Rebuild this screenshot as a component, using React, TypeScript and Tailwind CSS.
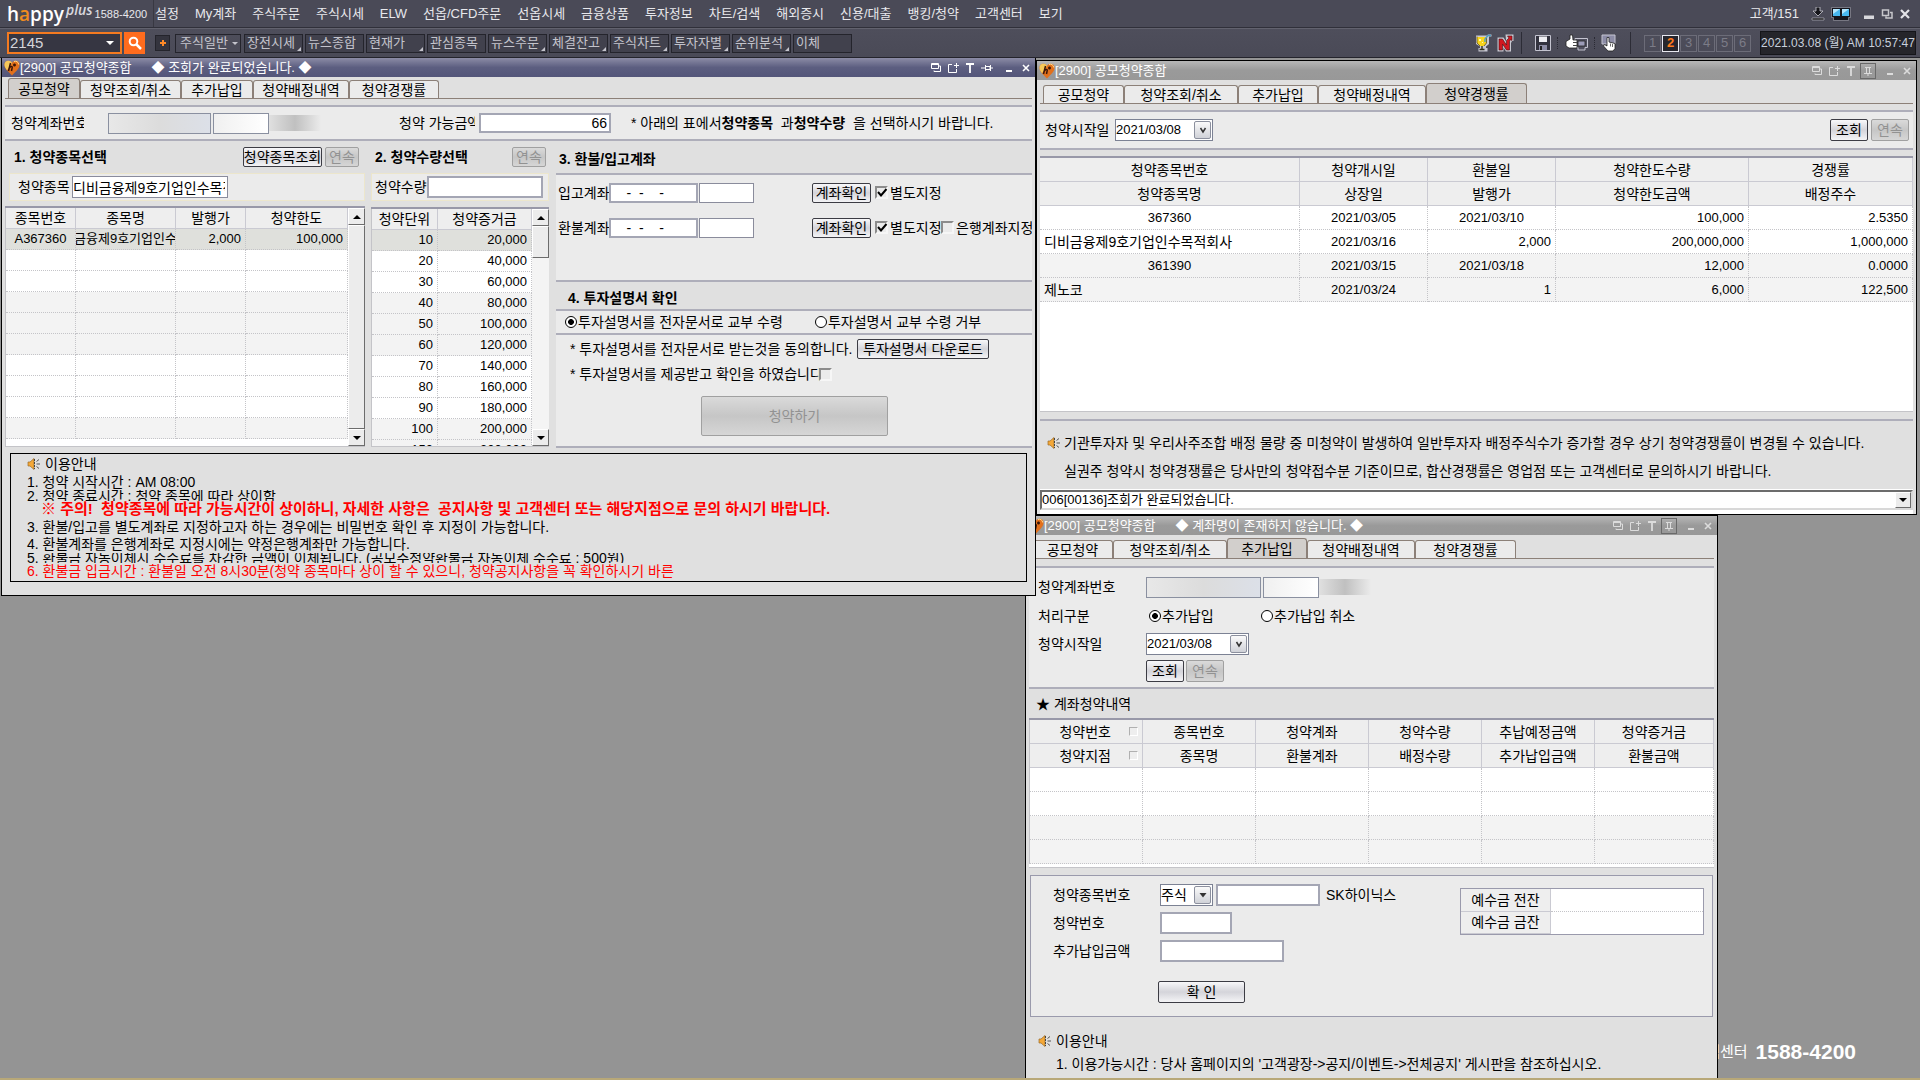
import { InputHTMLAttributes, ReactNode } from 'react';

import clsx from 'clsx';

const MENU = [
  '설정', 'My계좌', '주식주문', '주식시세', 'ELW', '선옵/CFD주문', '선옵시세', '금융상품',
  '투자정보', '차트/검색', '해외증시', '신용/대출', '뱅킹/청약', '고객센터', '보기',
];

const SHORTCUTS = [
  { label: '장전시세', more: true },
  { label: '뉴스종합', more: false },
  { label: '현재가', more: true },
  { label: '관심종목', more: false },
  { label: '뉴스주문', more: true },
  { label: '체결잔고', more: true },
  { label: '주식차트', more: true },
  { label: '투자자별', more: true },
  { label: '순위분석', more: true },
  { label: '이체', more: false },
];

const TABS = [
  { label: '공모청약', width: 'w-[72px]', wide: 'w-[81px]' },
  { label: '청약조회/취소', width: 'w-[101px]', wide: 'w-[114px]' },
  { label: '추가납입', width: 'w-[72px]', wide: 'w-[80px]' },
  { label: '청약배정내역', width: 'w-[96px]', wide: 'w-[108px]' },
  { label: '청약경쟁률', width: 'w-[90px]', wide: 'w-[101px]' },
];

const UNITS = [
  ['10', '20,000'],
  ['20', '40,000'],
  ['30', '60,000'],
  ['40', '80,000'],
  ['50', '100,000'],
  ['60', '120,000'],
  ['70', '140,000'],
  ['80', '160,000'],
  ['90', '180,000'],
  ['100', '200,000'],
  ['150', '300,000'],
];

const RATES = [
  {
    code: '367360', open: '2021/03/05', refund: '2021/03/10', limitQty: '100,000', rate: '2.5350',
    name: '디비금융제9호기업인수목적회사', listed: '2021/03/16', price: '2,000', limitAmt: '200,000,000', alloc: '1,000,000',
  },
  {
    code: '361390', open: '2021/03/15', refund: '2021/03/18', limitQty: '12,000', rate: '0.0000',
    name: '제노코', listed: '2021/03/24', price: '1', limitAmt: '6,000', alloc: '122,500',
  },
];

const HISTORY_HEAD = [
  ['청약번호', '종목번호', '청약계좌', '청약수량', '추납예정금액', '청약증거금'],
  ['청약지점', '종목명', '환불계좌', '배정수량', '추가납입금액', '환불금액'],
];

// three white rows, three shaded rows, repeating
const shade = (i: number) => (i === 0 ? 'bg-[#dfe0dc]' : Math.floor(i / 3) % 2 === 1 ? 'bg-[#f3f3f3]' : 'bg-white');

const CELL = 'border-r border-b border-dotted border-[#c4c4c8] p-0';
const HEAD = 'border-r border-b border-[#cacad2] bg-[#eeeeee] p-0 text-center font-normal';

function HeartIcon() {
  return (
    <svg viewBox="0 0 16 16" className="h-4 w-4 shrink-0" aria-hidden="true">
      <path d="M8 15.5C4 11.5.5 8.500.5 4.800.5 2.300 2.200.8 4.300.8 6 .8 7.300 1.700 8 3c.7-1.300 2-2.200 3.700-2.200 2.100 0 3.800 1.500 3.800 4C15.500 8.500 12 11.500 8 15.500z" fill="#e2701c" />
      <path d="M8 3C7.300 1.700 6 .8 4.300.8 2.200.8.5 2.300.5 4.800c0 2 1 3.700 2.500 5.400L8 3z" fill="#f6c95a" />
      <path d="M10 1.500c2-.9 4.500.3 4.700 3" stroke="#ffd98a" fill="none" />
      <path d="M6.500 3 4.500 11M5.500 8c1-2 3-2 2.700-.3L7.500 11M10.500 3.500v3M9 5h3" stroke="#3a1608" strokeWidth="1.500" fill="none" />
    </svg>
  );
}

function SpeakerIcon() {
  return (
    <svg viewBox="0 0 14 12" className="h-3 w-3.5 shrink-0" aria-hidden="true">
      <path d="M1 4h2l4-3.500v11L3 8H1z" fill="#f4a838" stroke="#9a6a28" strokeWidth=".7" />
      <path d="M7.500 1v10" stroke="#444" strokeDasharray="2 1" />
      <path d="M9.500 3.500 12 1.500M9.500 6H13M9.500 8.500l2.500 2" stroke="#555" />
    </svg>
  );
}

function WindowControls({ pinned }: { pinned?: boolean }) {
  const button = 'flex h-4 w-4 items-center justify-center';
  return (
    <div className={clsx('ml-auto flex items-center gap-px pr-px', pinned ? 'text-[#dcdcdc]' : 'text-white')}>
      <button type="button" aria-label="창 복사" className={button}>
        <svg viewBox="0 0 12 12" className="h-3 w-3" fill="none" stroke="currentColor">
          <path d="M1.500 1.500h7v5h-7zM1 2.500h8M4 8.500v1h6.500V4H9" />
        </svg>
      </button>
      <button type="button" aria-label="새 창" className={button}>
        <svg viewBox="0 0 12 12" className="h-3 w-3" fill="none" stroke="currentColor">
          <path d="M5 2.500H1.500v8h8V7M7 3.500h5M9.500 1v5" />
        </svg>
      </button>
      <button type="button" aria-label="글꼴" className={button}>
        <svg viewBox="0 0 12 12" className="h-3 w-3" fill="none" stroke="currentColor">
          <path d="M2 2h8M6 2v9" strokeWidth="1.800" />
        </svg>
      </button>
      <button type="button" aria-label="고정" className={clsx(button, pinned && 'border border-[#6a6a6a]')}>
        {pinned ? (
          <svg viewBox="0 0 12 12" className="h-3 w-3" fill="none" stroke="currentColor">
            <path d="M3 2.500h6M4.500 3v5M7.500 3v5M2 8.500h8M6 9v2" />
          </svg>
        ) : (
          <svg viewBox="0 0 12 12" className="h-3 w-3" fill="none" stroke="currentColor">
            <path d="M0 6h4M4.500 3v6M5 4.500h4v3H5M9.500 3v6M10 6h2" />
          </svg>
        )}
      </button>
      <button type="button" aria-label="최소화" className={clsx(button, 'ml-[5px]')}>
        <svg viewBox="0 0 12 12" className="h-3 w-3" fill="none" stroke="currentColor">
          <path d="M3 9h6" strokeWidth="2" />
        </svg>
      </button>
      <button type="button" aria-label="닫기" className={button}>
        <svg viewBox="0 0 12 12" className="h-3 w-3" fill="none" stroke="currentColor">
          <path d="m3 3 6 6M9 3 3 9" strokeWidth="1.600" />
        </svg>
      </button>
    </div>
  );
}

function TitleBar({ message, active }: { message?: string; active?: boolean }) {
  return (
    <div
      className={clsx(
        'flex h-[19px] items-center overflow-hidden pl-[2px] text-[13px] whitespace-pre text-white',
        active
          ? 'bg-linear-to-b from-[#8c8ca6] via-[#5c5e80] to-[#54567a]'
          : 'bg-linear-to-b from-[#b8b8b8] via-[#9a9a9a] to-[#989898]',
      )}
    >
      <HeartIcon />
      <span>[2900] 공모청약종합</span>
      {message && <span className="pl-5">◆ {message} ◆</span>}
      <WindowControls pinned={!active} />
    </div>
  );
}

function TabBar({ selected, wide }: { selected: string; wide?: boolean }) {
  return (
    <div role="tablist" className={clsx('mx-[3px] flex items-end border-b border-[#8c8078]', wide ? 'h-6' : 'h-[22px]')}>
      {TABS.map((tab) => (
        <button
          key={tab.label}
          type="button"
          role="tab"
          aria-selected={tab.label === selected}
          className={clsx(
            'rounded-t-[3px] border border-b-0 border-[#8c8078] whitespace-nowrap first:ml-[3px]',
            wide ? tab.wide : tab.width,
            tab.label === selected ? 'h-[20px] bg-[#d2cfcc]' : 'h-[18px] bg-[#ebebeb]',
          )}
        >
          {tab.label}
        </button>
      ))}
    </div>
  );
}

function PushButton({ children, disabled, className }: { children: ReactNode; disabled?: boolean; className: string }) {
  return (
    <button
      type="button"
      disabled={disabled}
      className={clsx(
        'shrink-0 overflow-hidden rounded-[2px] border whitespace-nowrap',
        disabled
          ? 'border-[#a0a0a0] bg-linear-to-b from-[#dadada] via-[#c6c6c6] to-[#d6d6d6] text-[#929292]'
          : 'border-[#3c3c44] bg-linear-to-b from-[#f8f8fa] via-[#d4d4da] to-[#f4f4f6] text-black',
        className,
      )}
    >
      <span className="flex justify-center">{children}</span>
    </button>
  );
}

function Field({ className, ...props }: InputHTMLAttributes<HTMLInputElement>) {
  return (
    <input
      {...props}
      className={clsx('shrink-0 rounded-none border bg-white pr-[2px] text-black outline-none', className)}
    />
  );
}

function Check({ id, label, checked, className }: { id: string; label: string; checked?: boolean; className?: string }) {
  return (
    <label htmlFor={id} className={clsx('flex items-center gap-[2px] overflow-hidden whitespace-nowrap', className)}>
      <span className="grid h-[13px] w-[13px] shrink-0">
        <input
          id={id}
          type="checkbox"
          defaultChecked={checked}
          className="peer col-start-1 row-start-1 h-[13px] w-[13px] appearance-none border-2 border-t-[#8c8c8c] border-r-[#f6f6f6] border-b-[#f6f6f6] border-l-[#8c8c8c] bg-[#ebebeb]"
        />
        <svg viewBox="0 0 13 13" className="pointer-events-none invisible col-start-1 row-start-1 peer-checked:visible" fill="none" stroke="#000" strokeWidth="2">
          <path d="m3 6 3 3.500L11.500 3" />
        </svg>
      </span>
      {label}
    </label>
  );
}

function Radio({ id, name, label, checked, className }: { id: string; name: string; label: string; checked?: boolean; className?: string }) {
  return (
    <label htmlFor={id} className={clsx('flex shrink-0 items-center gap-px whitespace-nowrap', className)}>
      <input
        id={id}
        type="radio"
        name={name}
        defaultChecked={checked}
        className="h-3 w-3 appearance-none rounded-full border border-black bg-white bg-radial from-white to-white checked:from-black checked:from-35% checked:to-white checked:to-45%"
      />
      {label}
    </label>
  );
}

function Dropdown({ id, value, className, glyph = 'v' }: { id: string; value: string; className: string; glyph?: 'v' | 'arrow' }) {
  return (
    <div className={clsx('grid shrink-0 border border-[#7c8294] bg-white', className)}>
      <select id={id} defaultValue={value} className="col-start-1 row-start-1 w-full appearance-none rounded-none bg-transparent text-black outline-none">
        <option>{value}</option>
      </select>
      <span className="pointer-events-none col-start-1 row-start-1 m-px flex w-[17px] items-center justify-center justify-self-end rounded-[2px] border border-[#8c909e] bg-linear-to-b from-[#fafafa] to-[#d0d2d8]">
        <svg viewBox="0 0 8 8" className="h-2 w-2" fill="none" stroke="#333" strokeWidth="1.500">
          {glyph === 'v' ? <path d="m1.500 2 2.500 4 2.500-4" /> : <path d="M.5 2h7L4 6.500z" fill="#333" stroke="none" />}
        </svg>
      </span>
    </div>
  );
}

function ScrollButton({ down }: { down?: boolean }) {
  return (
    <button
      type="button"
      aria-label={down ? '아래로' : '위로'}
      className="flex h-[17px] w-full shrink-0 items-center justify-center border border-t-white border-r-[#6c6c6c] border-b-[#6c6c6c] border-l-white bg-[#ececec]"
    >
      <svg viewBox="0 0 8 4" className="h-1 w-2">
        <path d={down ? 'M0 0h8L4 4z' : 'M0 4h8L4 0z'} fill="#000" />
      </svg>
    </button>
  );
}

function ScrollBar({ full }: { full?: boolean }) {
  return (
    <div className="flex w-[17px] shrink-0 flex-col bg-[#f4f4f4]">
      <ScrollButton />
      <div
        className={clsx(
          'border border-t-white border-r-[#6c6c6c] border-b-[#6c6c6c] border-l-white bg-[#ececec]',
          full ? 'flex-1' : 'mb-auto h-8',
        )}
      />
      <ScrollButton down />
    </div>
  );
}

function MaskedAccount({ id, size }: { id: string; size: string }) {
  return (
    <div className="flex shrink-0 items-center">
      <Field id={id} readOnly className={clsx('h-[21px] border-[#8a90a0] bg-linear-to-r from-[#e8e8e8] via-[#dcdcdc] to-[#dce0e8]', size)} />
      <Field aria-label="계좌 비밀번호" readOnly className="ml-[2px] h-[21px] w-[56px] border-[#8a90a0] bg-linear-to-r from-[#f0f0f0] to-white" />
      <span className="h-4 w-[52px] bg-linear-to-r from-[#e0e0e0] via-[#c0c0c0] to-[#ebebeb]" />
    </div>
  );
}

function TopBar() {
  return (
    <header className="bg-[#4a4a57] text-[13px] text-[#e8e8ec]">
      <div className="flex h-7 items-center border-b border-[#30303a]">
        <div className="flex h-full w-[154px] shrink-0 items-center border-r border-[#383842] pl-[7px]">
          <span className="font-['Open_Sans'] text-[19px] font-semibold text-white">
            h<span className="text-[#f08c1e]">a</span>ppy
          </span>
          <span className="mb-2 ml-[2px] font-['Open_Sans'] text-[14px] font-semibold text-[#d8d8de] italic">plus</span>
          <span className="ml-[2px] text-[11px] whitespace-nowrap">1588-4200</span>
        </div>
        <nav className="flex items-center gap-4 pl-px">
          {MENU.map((item) => (
            <a key={item} href="#" className="whitespace-nowrap">
              {item}
            </a>
          ))}
        </nav>
        <div className="ml-auto flex items-center pr-[9px]">
          <span className="mr-3">고객/151</span>
          <svg viewBox="0 0 14 14" className="h-3.5 w-3.5" aria-hidden="true">
            <path d="M5 0h4v4h3L7 9 2 4h3z" fill="#15151a" stroke="#c8c8d0" strokeWidth=".8" />
            <path d="M1 11h12v2H1z" fill="#111" stroke="#c8c8d0" strokeWidth=".6" />
          </svg>
          <svg viewBox="0 0 20 14" className="ml-1.5 h-3.5 w-5" aria-hidden="true">
            <path d="M.5.5h19v10h-2v3h-15v-3h-2z" fill="#15151c" stroke="#a8a8b4" strokeWidth=".6" />
            <path d="M2 2h7v7H2zM11 2h7v7h-7z" fill="#48b8f0" />
            <path d="M2 2h7L2 7zM11 2h7l-7 5z" fill="#b4e6fc" />
          </svg>
          <button type="button" aria-label="최소화" className="ml-3">
            <svg viewBox="0 0 12 12" className="h-3 w-3"><path d="M1 7.500h10V11H1z" fill="#d8d8dc" /></svg>
          </button>
          <button type="button" aria-label="이전 크기로" className="ml-[6px]">
            <svg viewBox="0 0 12 12" className="h-3 w-3" fill="none" stroke="#c8c8cc" strokeWidth="1.500"><path d="M1.500 2h6v5.500h-6zM9 4.500h2V10H5V8.500" /></svg>
          </button>
          <button type="button" aria-label="닫기" className="ml-[6px]">
            <svg viewBox="0 0 12 12" className="h-3 w-3" stroke="#e4e4e8" strokeWidth="2.200"><path d="m2 2 8 8M10 2l-8 8" /></svg>
          </button>
        </div>
      </div>

      <div className="flex h-[30px] items-center border-t border-b border-t-[#62626e] border-b-[#24242c] bg-linear-to-b from-[#4e4e5b] to-[#4a4a57] pl-[7px] text-[#c4c4cc]">
        <div className="grid h-[22px] w-[115px] shrink-0 border-2 border-[#f47a20] bg-[#363642]">
          <input aria-label="화면번호" defaultValue="2145" className="col-start-1 row-start-1 w-full bg-transparent pl-px text-[15px] text-[#d4d4da] outline-none" />
          <svg viewBox="0 0 8 4" className="pointer-events-none col-start-1 row-start-1 mr-1.5 h-1 w-2 self-center justify-self-end"><path d="M0 0h8L4 4z" fill="#fff" /></svg>
        </div>
        <button type="button" aria-label="검색" className="ml-[2px] flex h-[22px] w-[21px] items-center justify-center bg-[#ff6c1e]">
          <svg viewBox="0 0 14 14" className="h-3.5 w-3.5" fill="none" stroke="#fff" strokeWidth="2"><circle cx="5.500" cy="5.500" r="3.800" /><path d="m8.500 8.500 4.500 4.500" strokeWidth="2.500" /></svg>
        </button>
        <button type="button" aria-label="추가" className="ml-[10px] flex h-4 w-[15px] items-center justify-center border border-[#24242c] bg-[#34343e]">
          <svg viewBox="0 0 8 8" className="h-2 w-2" stroke="#ff8a28" strokeWidth="2"><path d="M4 1v6M1 4h6" /></svg>
        </button>
        <button type="button" className="ml-[5px] flex h-[19px] w-[66px] items-center border border-[#24242c] pl-1 whitespace-nowrap">
          주식일반
          <svg viewBox="0 0 6 3" className="mr-[2px] ml-auto h-[3px] w-1.5"><path d="M0 0h6L3 3z" fill="#c4c4cc" /></svg>
        </button>
        <div className="flex gap-[2px] pl-[3px]">
          {SHORTCUTS.map((item) => (
            <button key={item.label} type="button" className="flex h-[19px] w-[59px] items-center border border-[#24242c] bg-[#41414d] pl-[2px] whitespace-nowrap">
              {item.label}
              {item.more && (
                <svg viewBox="0 0 5 5" className="mt-auto mr-px mb-px ml-auto h-1 w-1"><path d="M5 0v5H0z" fill="#c4c4cc" /></svg>
              )}
            </button>
          ))}
        </div>

        <div className="ml-auto flex shrink-0 items-center pr-1">
          <button type="button" aria-label="라운지">
            <svg viewBox="0 0 17 18" className="h-[18px] w-[17px]">
              <path d="M1 1.500h11L13 .5h3.500v2H14V10l-3 2.500v1.500h1.500v3.500h-9V14H5v-1.500L1 10z" fill="#c8c8d4" />
              <path d="M2 3h9.500v6l-2.500 3H5L2 9z" fill="#f8d41c" />
              <path d="M2 2.500V9l3 3M11.500 4v5L9 12" stroke="#5a5020" strokeWidth=".8" fill="none" />
              <path d="M7 12v3M4.500 15.500h5" stroke="#33331c" strokeWidth="1.400" />
              <path d="M4 5h2v2H4zM7 8h1v1H7z" fill="#fff8b0" />
              <path d="M10 8V5l3-3.500h3" stroke="#4c9cc0" strokeWidth="1.400" fill="none" />
            </svg>
          </button>
          <button type="button" aria-label="뉴스" className="ml-[5px]">
            <svg viewBox="0 0 17 18" className="h-[18px] w-[17px]">
              <path d="M.5 3.500h6l2.500 4V6l-.5-5.500h8V7H15l-1 2v8.500H9l-2.500-4v4H.5z" fill="#c8c8d0" />
              <path d="M2 16V5h3.500l4 6V6.500L12 4l-1.500-2H15v4.500L13.500 5.500l-1 2V16h-3l-4-6v6z" fill="#d01820" stroke="#4c0c10" strokeWidth=".6" />
            </svg>
          </button>
          <span className="mx-[7px] h-[22px] w-px bg-[#2c2c36]" />
          <button type="button" aria-label="저장" className="ml-1.5">
            <svg viewBox="0 0 16 16" className="h-4 w-4">
              <path d="M.5.5h15v15H.5z" fill="#33333f" stroke="#c4c4d0" />
              <path d="M4 1.500h8V7H4z" fill="#f0f0f4" />
              <path d="M4 10h8v5H4z" fill="#8c8ca4" />
              <path d="M5 11h2v4H5z" fill="#222" />
            </svg>
          </button>
          <span className="mx-[6px] h-3 border-l border-dotted border-[#2a2a34]" />
          <button type="button" aria-label="추천" className="ml-px">
            <svg viewBox="0 0 23 18" className="h-[18px] w-[23px]">
              <path d="M10 4.500h12.500v9H20v2.500h-7v-2.500h-3z" fill="#50505f" stroke="#c4c4d0" />
              <path d="M13 7h7v5h-7z" fill="#9c9cb8" stroke="#222" strokeWidth=".8" />
              <path d="M1 7.500 5 5V1h2.500L8 6h4v8H4l-3-2z" fill="#fff" stroke="#222" strokeWidth=".8" />
              <path d="M8 8.500h4M8 11.500h4" stroke="#444" />
            </svg>
          </button>
          <span className="mx-[6px] h-3 border-l border-dotted border-[#2a2a34]" />
          <button type="button" aria-label="선택">
            <svg viewBox="0 0 16 18" className="h-[18px] w-4">
              <path d="M1 1h13v9H1z" fill="#8c8ca6" stroke="#c4c4d0" />
              <path d="M6 3.500h2V8l6 1.500v5L12 17H7l-4.500-5 1-1.500L6 12z" fill="#fff" stroke="#222" strokeWidth=".8" />
              <path d="M9.500 9.500v3M11.500 10v3" stroke="#444" strokeWidth=".8" />
            </svg>
          </button>
          <span className="mx-[13px] h-[22px] w-px bg-[#2c2c36]" />
          <div className="flex gap-px">
            {[1, 2, 3, 4, 5, 6].map((n) => (
              <button
                key={n}
                type="button"
                className={clsx(
                  'h-[17px] w-[17px] border',
                  n === 2 ? 'border-[#e8e8f0] bg-[#26262e] font-bold text-[#ff7a1c]' : 'border-[#6c6c78] text-[#7c7c88]',
                )}
              >
                <span className="flex h-full items-center justify-center">{n}</span>
              </button>
            ))}
          </div>
          <time className="ml-[9px] flex h-6 w-[156px] items-center justify-center border border-[#15151a] bg-[#25252b] text-[12px] whitespace-nowrap text-[#c8d0dc]">
            2021.03.08 (월) AM 10:57:47
          </time>
        </div>
      </div>
    </header>
  );
}

function StockTable() {
  return (
    <div className="flex h-[241px] border-t-2 border-b border-t-[#9898a8] border-b-[#c4c4c8] bg-white">
      <div className="flex-1 overflow-hidden border-l border-[#c4c4c8]">
        <table className="w-full table-fixed border-separate border-spacing-0">
          <colgroup>
            <col className="w-[70px]" />
            <col className="w-[100px]" />
            <col className="w-[70px]" />
            <col />
          </colgroup>
          <thead>
            <tr className="h-[21px]">
              {['종목번호', '종목명', '발행가', '청약한도'].map((h) => (
                <th key={h} className={HEAD}>{h}</th>
              ))}
            </tr>
          </thead>
          <tbody>
            {Array.from({ length: 10 }, (_, i) => (
              <tr key={i} className={clsx('h-[21px] text-[13px]', shade(i))}>
                <td className={clsx(CELL, 'text-center')}>{i === 0 && 'A367360'}</td>
                <td className={CELL}>
                  {i === 0 && <div className="flex justify-center overflow-hidden whitespace-nowrap">금융제9호기업인수</div>}
                </td>
                <td className={clsx(CELL, 'pr-1 text-right')}>{i === 0 && '2,000'}</td>
                <td className={clsx(CELL, 'pr-1 text-right')}>{i === 0 && '100,000'}</td>
              </tr>
            ))}
          </tbody>
        </table>
      </div>
      <ScrollBar full />
    </div>
  );
}

function UnitTable() {
  return (
    <div className="flex h-[240px] border-t-2 border-b border-t-[#9898a8] border-b-[#c4c4c8] bg-white">
      <div className="flex-1 overflow-hidden border-l border-[#c4c4c8]">
        <table className="w-full table-fixed border-separate border-spacing-0">
          <colgroup>
            <col className="w-[66px]" />
            <col />
          </colgroup>
          <thead>
            <tr className="h-[21px]">
              <th className={HEAD}>청약단위</th>
              <th className={HEAD}>청약증거금</th>
            </tr>
          </thead>
          <tbody>
            {UNITS.map(([unit, deposit], i) => (
              <tr key={unit} className={clsx('h-[21px]', shade(i))}>
                <td className={clsx(CELL, 'pr-1 text-right text-[13px]')}>{unit}</td>
                <td className={clsx(CELL, 'pr-1 text-right text-[13px]')}>{deposit}</td>
              </tr>
            ))}
          </tbody>
        </table>
      </div>
      <ScrollBar />
    </div>
  );
}

function RefundRow({ id, label, bank }: { id: string; label: string; bank?: boolean }) {
  return (
    <div className="flex h-[35px] items-center pl-[2px]">
      <label htmlFor={id} className="w-[51px] shrink-0 overflow-hidden whitespace-nowrap">{label}</label>
      <Field id={id} defaultValue="    -  -    -" className="h-5 w-[89px] border-2 border-[#a4a6b4]" />
      <Field aria-label={`${label} 비밀번호`} className="ml-px h-5 w-[55px] border-[#8a8c9c]" />
      <PushButton className="ml-[58px] h-5 w-[59px]">계좌확인</PushButton>
      <Check id={`${id}-extra`} label="별도지정" checked className="ml-1 w-[66px] shrink-0" />
      {bank && <Check id={`${id}-bank`} label="은행계좌지정" className="min-w-0 flex-1" />}
    </div>
  );
}

function SubscribeWindow() {
  return (
    <section className="absolute top-0 left-px z-20 w-[1035px] border-x border-b border-black bg-[#e0e0e0] pb-[13px]">
      <TitleBar active message="조회가 완료되었습니다." />
      <TabBar selected="공모청약" />
      <div className="mx-[3px] mt-1.5 flex h-9 items-center border-y-2 border-[#aeaeba] bg-[#ebebeb] pl-1.5">
        <label htmlFor="account" className="w-[73px] shrink-0 overflow-hidden whitespace-nowrap">청약계좌번호</label>
        <div className="pl-6"><MaskedAccount id="account" size="w-[103px]" /></div>
        <label htmlFor="available" className="ml-[78px] w-[76px] shrink-0 overflow-hidden whitespace-nowrap">청약 가능금액</label>
        <Field id="available" defaultValue="66" className="ml-1 h-5 w-[132px] border-2 border-[#a4a6b4] text-right" />
        <p className="pl-5 whitespace-pre">
          * 아래의 표에서<strong>청약종목</strong>  과<strong>청약수량</strong>  을 선택하시기 바랍니다.
        </p>
      </div>

      <div className="flex px-[3px]">
        <div className="w-[360px] shrink-0">
          <div className="flex h-8 items-center pl-[9px]">
            <h2 className="font-bold whitespace-nowrap">1. 청약종목선택</h2>
            <PushButton className="ml-auto h-5 w-[79px]">청약종목조회</PushButton>
            <PushButton disabled className="mr-1.5 ml-[3px] h-5 w-[34px]">연속</PushButton>
          </div>
          <div className="mb-[5px] ml-1 flex h-7 items-center border border-[#ece6cc] bg-[#ebebeb] pl-2">
            <label htmlFor="stock" className="w-[54px] shrink-0 whitespace-nowrap">청약종목</label>
            <Field id="stock" defaultValue="디비금융제9호기업인수목적회사" className="h-[22px] w-[156px] border-[#8a8c9c]" />
          </div>
          <StockTable />
        </div>

        <div className="ml-[6px] w-[178px] shrink-0">
          <div className="flex h-8 items-center pl-1">
            <h2 className="font-bold whitespace-nowrap">2. 청약수량선택</h2>
            <PushButton disabled className="mr-[3px] ml-auto h-5 w-[34px]">연속</PushButton>
          </div>
          <div className="mb-[6px] flex h-7 items-center border border-[#ece6cc] bg-[#ebebeb] pl-[3px]">
            <label htmlFor="qty" className="w-[52px] shrink-0 whitespace-nowrap">청약수량</label>
            <Field id="qty" className="h-[22px] w-[116px] border-2 border-[#a4a6b4]" />
          </div>
          <UnitTable />
        </div>

        <div className="ml-[7px] min-w-0 flex-1">
          <h2 className="flex h-8 items-center pt-1 pl-[3px] font-bold">3. 환불/입고계좌</h2>
          <div className="h-[109px] border-y-2 border-[#aeaeba] bg-[#ebebeb]">
            <RefundRow id="deposit" label="입고계좌" />
            <RefundRow id="refund" label="환불계좌" bank />
          </div>
          <h2 className="flex h-[27px] items-center pt-1 pl-3 font-bold">4. 투자설명서 확인</h2>
          <div className="flex h-[26px] items-center border-y-2 border-[#aeaeba] bg-[#ebebeb] pl-[9px]">
            <Radio id="doc-yes" name="doc" label="투자설명서를 전자문서로 교부 수령" checked />
            <Radio id="doc-no" name="doc" label="투자설명서 교부 수령 거부" className="ml-8" />
          </div>
          <div className="h-[113px] border-b-2 border-[#aeaeba] bg-[#ebebeb] pt-px pl-[14px]">
            <div className="flex h-[26px] items-center">
              <p className="w-[287px] whitespace-nowrap">* 투자설명서를 전자문서로 받는것을 동의합니다.</p>
              <PushButton className="h-5 w-[132px]">투자설명서 다운로드</PushButton>
            </div>
            <div className="flex h-6 items-center">
              <label htmlFor="confirm" className="w-[249px] overflow-hidden whitespace-nowrap">* 투자설명서를 제공받고 확인을 하였습니다.</label>
              <Check id="confirm" label="" />
            </div>
            <PushButton disabled className="mt-[10px] ml-[131px] h-10 w-[187px]">청약하기</PushButton>
          </div>
        </div>
      </div>

      <div className="mr-2 ml-2 mt-[5px] h-[129px] overflow-hidden border border-black pl-4 whitespace-nowrap">
        <h3 className="flex h-5 items-center gap-1">
          <SpeakerIcon />
          이용안내
        </h3>
        <p className="h-4">1. 청약 시작시간 : AM 08:00</p>
        <p className="flex h-[11px] items-center overflow-hidden">2. 청약 종료시간 : 청약 종목에 따라 상이함</p>
        <p className="h-[18px] pl-3.5 text-[15px] font-bold whitespace-pre text-[#ff0000]">
          ※ 주의!  청약종목에 따라 가능시간이 상이하니, 자세한 사항은  공지사항 및 고객센터 또는 해당지점으로 문의 하시기 바랍니다.
        </p>
        <p className="h-[17px]">3. 환불/입고를 별도계좌로 지정하고자 하는 경우에는 비밀번호 확인 후 지정이 가능합니다.</p>
        <p className="h-[17px]">4. 환불계좌를 은행계좌로 지정시에는 약정은행계좌만 가능합니다.</p>
        <p className="mb-px flex h-[10px] items-center overflow-hidden">5. 환불금 자동이체시 수수료를 차감한 금액이 이체됩니다. (공모주청약환불금 자동이체 수수료 : 500원)</p>
        <p className="flex h-[14px] items-center overflow-hidden text-[#ff0000]">6. 환불금 입금시간 : 환불일 오전 8시30분(청약 종목마다 상이 할 수 있으니, 청약공지사항을 꼭 확인하시기 바른</p>
      </div>
    </section>
  );
}

function RateWindow() {
  return (
    <section className="absolute top-[2px] left-[1036px] z-10 w-[881px] border border-black bg-[#e0e0e0]">
      <TitleBar />
      <TabBar selected="청약경쟁률" wide />
      <div className="mx-[3px] mt-1.5 flex h-10 items-center border-y-2 border-[#aeaeba] bg-[#ebebeb] pr-1 pl-[5px]">
        <label htmlFor="rate-date" className="w-[70px]">청약시작일</label>
        <Dropdown id="rate-date" value="2021/03/08" className="h-[22px] w-[98px] text-[13px]" />
        <PushButton className="ml-auto h-[22px] w-[38px]">조회</PushButton>
        <PushButton disabled className="ml-[3px] h-[22px] w-[38px]">연속</PushButton>
      </div>
      <div className="mx-[3px] mt-[6px] h-[256px] border-t-2 border-b border-t-[#9898a8] border-b-[#c4c4c8] bg-white">
        <table className="w-full table-fixed border-separate border-spacing-0">
          <colgroup>
            <col className="w-[260px]" />
            <col className="w-32" />
            <col className="w-32" />
            <col className="w-[193px]" />
            <col />
          </colgroup>
          <thead>
            <tr className="h-6">
              {['청약종목번호', '청약개시일', '환불일', '청약한도수량', '경쟁률'].map((h) => (
                <th key={h} className={HEAD}>{h}</th>
              ))}
            </tr>
            <tr className="h-6">
              {['청약종목명', '상장일', '발행가', '청약한도금액', '배정주수'].map((h) => (
                <th key={h} className={HEAD}>{h}</th>
              ))}
            </tr>
          </thead>
          {RATES.map((r, i) => (
            <tbody key={r.code} className={clsx('text-[13px]', i % 2 === 1 && 'bg-[#f3f3f3]')}>
              <tr className="h-6">
                <td className={clsx(CELL, 'text-center')}>{r.code}</td>
                <td className={clsx(CELL, 'text-center')}>{r.open}</td>
                <td className={clsx(CELL, 'text-center')}>{r.refund}</td>
                <td className={clsx(CELL, 'pr-1 text-right')}>{r.limitQty}</td>
                <td className={clsx(CELL, 'pr-1 text-right')}>{r.rate}</td>
              </tr>
              <tr className="h-6">
                <td className={clsx(CELL, 'pl-1 text-[14px]')}>{r.name}</td>
                <td className={clsx(CELL, 'text-center')}>{r.listed}</td>
                <td className={clsx(CELL, 'pr-1 text-right')}>{r.price}</td>
                <td className={clsx(CELL, 'pr-1 text-right')}>{r.limitAmt}</td>
                <td className={clsx(CELL, 'pr-1 text-right')}>{r.alloc}</td>
              </tr>
            </tbody>
          ))}
        </table>
      </div>
      <div className="mx-[3px] mt-[7px] border-t-2 border-[#aeaeba] pt-2 pl-[7px] whitespace-nowrap">
        <p className="flex h-7 items-center gap-[3px]">
          <SpeakerIcon />
          기관투자자 및 우리사주조합 배정 물량 중 미청약이 발생하여 일반투자자 배정주식수가 증가할 경우 상기 청약경쟁률이 변경될 수 있습니다.
        </p>
        <p className="flex h-7 items-center pl-[17px]">실권주 청약시 청약경쟁률은 당사만의 청약접수분 기준이므로, 합산경쟁률은 영업점 또는 고객센터로 문의하시기 바랍니다.</p>
      </div>
      <div className="mx-[3px] mt-1 bg-white pt-px pb-[4px]">
        <div className="grid h-[20px] border-2 border-t-[#6c6c6c] border-r-[#d8d8d8] border-b-[#d8d8d8] border-l-[#6c6c6c]">
          <select aria-label="처리 메시지" defaultValue="msg" className="col-start-1 row-start-1 w-full appearance-none bg-white text-[13px] outline-none">
            <option value="msg">006[00136]조회가 완료되었습니다.</option>
          </select>
          <span className="pointer-events-none col-start-1 row-start-1 flex w-4 items-center justify-center justify-self-end border border-t-white border-r-[#6c6c6c] border-b-[#6c6c6c] border-l-white bg-[#ececec]">
            <svg viewBox="0 0 8 4" className="h-1 w-2"><path d="M0 0h8L4 4z" fill="#000" /></svg>
          </span>
        </div>
      </div>
    </section>
  );
}

function ExtraPaymentWindow() {
  return (
    <section className="absolute top-[457px] left-[1025px] w-[693px] border-x border-t border-black bg-[#e0e0e0]">
      <TitleBar message="계좌명이 존재하지 않습니다." />
      <TabBar selected="추가납입" wide />
      <div className="mx-[3px] mt-[7px] border-y-2 border-[#aeaeba] bg-[#ebebeb] pt-1 pb-[5px] pl-[9px]">
        <div className="flex h-[30px] items-center">
          <label htmlFor="account2" className="w-[108px]">청약계좌번호</label>
          <MaskedAccount id="account2" size="w-[115px]" />
        </div>
        <fieldset className="flex h-7 items-center">
          <span className="w-[111px]">처리구분</span>
          <Radio id="pay-add" name="pay" label="추가납입" checked className="w-28" />
          <Radio id="pay-cancel" name="pay" label="추가납입 취소" />
        </fieldset>
        <div className="flex h-7 items-center">
          <label htmlFor="pay-date" className="w-[108px]">청약시작일</label>
          <Dropdown id="pay-date" value="2021/03/08" className="h-[22px] w-[103px] text-[13px]" />
        </div>
        <div className="mt-[2px] flex gap-[2px] pl-[108px]">
          <PushButton className="h-[22px] w-[38px]">조회</PushButton>
          <PushButton disabled className="h-[22px] w-[38px]">연속</PushButton>
        </div>
      </div>

      <h2 className="flex h-[29px] items-center pl-[10px]">★ 계좌청약내역</h2>
      <div className="mx-[3px] border-t-2 border-b border-t-[#9898a8] border-b-[#c4c4c8] bg-white pb-[3px]">
        <table className="w-full table-fixed border-separate border-spacing-0 border-l border-[#c4c4c8]">
          <colgroup>
            <col className="w-[113px]" />
            <col className="w-[113px]" />
            <col className="w-[113px]" />
            <col className="w-[113px]" />
            <col className="w-[113px]" />
            <col />
          </colgroup>
          <thead>
            {HISTORY_HEAD.map((row) => (
              <tr key={row[0]} className="h-6">
                {row.map((h, i) => (
                  <th key={h} className={HEAD}>
                    {i === 0 ? (
                      <label className="flex items-center justify-end gap-[18px] pr-1">
                        {h}
                        <input type="checkbox" className="h-[9px] w-[9px] appearance-none border border-t-[#b0b0b0] border-r-white border-b-white border-l-[#b0b0b0]" />
                      </label>
                    ) : (
                      h
                    )}
                  </th>
                ))}
              </tr>
            ))}
          </thead>
          <tbody>
            {[0, 1, 2, 3].map((i) => (
              <tr key={i} className={clsx('h-6', i > 1 && 'bg-[#f3f3f3]')}>
                {HISTORY_HEAD[0].map((h) => (
                  <td key={h} className={CELL} />
                ))}
              </tr>
            ))}
          </tbody>
        </table>
      </div>

      <div className="mx-1 mt-[7px] flex justify-between border border-[#9a9aac] bg-[#ebebeb] pt-1 pr-2 pb-[13px] pl-[22px]">
        <form className="flex flex-col">
          <div className="flex h-[29px] items-center">
            <label htmlFor="kind" className="w-[107px]">청약종목번호</label>
            <Dropdown id="kind" value="주식" glyph="arrow" className="h-[22px] w-[53px]" />
            <Field aria-label="종목번호" className="ml-[3px] h-[22px] w-[104px] border-2 border-[#a4a6b4]" />
            <span className="pl-[6px]">SK하이닉스</span>
          </div>
          <div className="flex h-7 items-center">
            <label htmlFor="order-no" className="w-[107px]">청약번호</label>
            <Field id="order-no" className="h-[22px] w-[72px] border-2 border-[#a4a6b4]" />
          </div>
          <div className="flex h-7 items-center">
            <label htmlFor="amount" className="w-[107px]">추가납입금액</label>
            <Field id="amount" className="h-[22px] w-[124px] border-2 border-[#a4a6b4]" />
          </div>
          <PushButton className="mt-4 ml-[105px] h-[22px] w-[87px]">확 인</PushButton>
        </form>
        <table className="mt-2 h-[47px] w-[244px] table-fixed border-separate border-spacing-0 border border-[#9a9aac] bg-white">
          <tbody>
            <tr>
              <th className={clsx(HEAD, 'w-[90px]')}>예수금 전잔</th>
              <td className="border-b border-dotted border-[#c4c4c8]" />
            </tr>
            <tr>
              <th className={clsx(HEAD, 'w-[90px]')}>예수금 금잔</th>
              <td />
            </tr>
          </tbody>
        </table>
      </div>

      <div className="pt-3 pb-1 pl-3">
        <h3 className="flex h-6 items-center gap-1">
          <SpeakerIcon />
          이용안내
        </h3>
        <p className="flex h-[22px] items-center pl-[18px]">1. 이용가능시간 : 당사 홈페이지의 '고객광장-&gt;공지/이벤트-&gt;전체공지' 게시판을 참조하십시오.</p>
      </div>
    </section>
  );
}

export default function App() {
  return (
    <div className="flex h-screen flex-col overflow-hidden bg-[#949494] font-['Liberation_Sans','Noto_Sans_CJK_KR',sans-serif] text-[14px] leading-4 text-black">
      <TopBar />
      <main className="relative flex-1 overflow-hidden">
        <p className="absolute right-16 bottom-[14px] flex items-center gap-2 text-[15px] text-white">
          고객센터 <strong className="text-[21px] leading-6">1588-4200</strong>
        </p>
        <SubscribeWindow />
        <RateWindow />
        <ExtraPaymentWindow />
      </main>
      <footer className="h-[2px] shrink-0 bg-[#b8a878]" />
    </div>
  );
}
